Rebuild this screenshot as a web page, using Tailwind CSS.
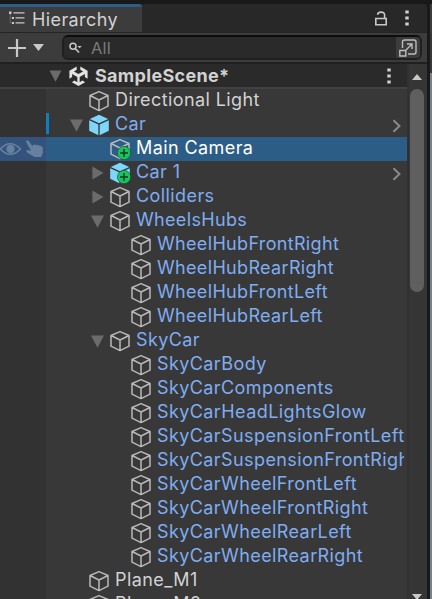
<!DOCTYPE html>
<html lang="en">
<head>
<meta charset="utf-8">
<title>Hierarchy</title>
<script src="https://cdn.jsdelivr.net/npm/@tailwindcss/browser@4"></script>
</head>
<body class="w-[432px] h-[599px] overflow-hidden bg-[#191919] font-['Inter',sans-serif] text-[18px] text-[#d2d2d2]">
<svg class="hidden">
  <symbol id="cube" viewBox="0 0 22 22"><path d="M11 1.6 20 5.5V16.2L11 20.6 2 16.2V5.5ZM2 5.5 11 10 20 5.5M11 10V20.6" fill="none" stroke="#b9b9b9" stroke-width="1.5" stroke-linejoin="round"/></symbol>
  <symbol id="prefab" viewBox="0 0 22 22"><path d="M11 .8 20.2 4.9 11 9.2 1.8 4.9ZM1.2 6.3 10.3 10.6V21.2L1.2 16.8ZM20.8 6.3 11.7 10.6V21.2L20.8 16.8Z" fill="#7fd6fd"/></symbol>
  <symbol id="plus" viewBox="0 0 14 14"><circle cx="7" cy="7" r="6.6" fill="#19c45c" stroke="#174b32" stroke-width=".6"/><path d="M7 3V11M3 7H11" stroke="#103c24" stroke-width="1.5"/></symbol>
  <symbol id="down" viewBox="0 0 12 12"><path d="M0 .4H12L6 11.8Z" fill="#6b6b6b"/></symbol>
  <symbol id="right" viewBox="0 0 12 14"><path d="M.4 .6V13.4L11.6 7Z" fill="#6b6b6b"/></symbol>
  <symbol id="chev" viewBox="0 0 10 14"><path d="M1.5 1.2 7.5 7 1.5 12.8" fill="none" stroke="#8c8c8c" stroke-width="1.9"/></symbol>
  <symbol id="dots" viewBox="0 0 4 16"><path d="M.3 .5H3.7V3.5H.3ZM.3 6.5H3.7V9.5H.3ZM.3 12.5H3.7V15.5H.3Z" fill="#d0d0d0"/></symbol>
</svg>
<div class="flex w-[432px] h-[599px]">
  <div class="w-[427px] shrink-0 flex flex-col pt-1">
    <header class="flex h-7 bg-[#282828] rounded-tr-[3px]">
      <div class="w-[142px] h-7 flex items-center bg-[#3c3c3c] border-t-[3px] border-[#2c5d87] rounded-tr-[3px] pl-[9px]">
        <svg class="w-4 h-3.5 mr-[7px] -mt-[3px]" viewBox="0 0 16 14"><g fill="#c8c8c8"><path d="M0 .5H2.5V3H0ZM3 6H5V8H3ZM3 11H5V13H3Z"/><path d="M4.5 1.2H15.5V2.5H4.5ZM6.5 6.2H15.5V7.5H6.5ZM6.5 11.2H15.5V12.5H6.5Z"/></g><path d="M1.2 3V7H3M1.2 7V12H3" stroke="#777" stroke-width=".7" fill="none"/></svg>
        <span class="tracking-[0.4px] leading-6 whitespace-nowrap">Hierarchy</span>
      </div>
      <div class="flex-1 flex items-center justify-end pr-[18px] gap-[18px]">
        <svg class="w-3 h-[15px]" viewBox="0 0 12 15"><path d="M.8 7.5H11.2V13.8H.8ZM2.6 3.8C2.6.2 9.6.2 9.6 3.8V7.5" fill="none" stroke="#c8c8c8" stroke-width="1.6"/></svg>
        <svg class="w-1 h-4"><use href="#dots"/></svg>
      </div>
    </header>
    <div class="h-8 flex items-center bg-[#3c3c3c] border-t border-b-2 border-t-[#242424] border-b-[#202020] pl-2">
      <svg class="w-[18px] h-[18px]" viewBox="0 0 18 18"><path d="M9 0V18M0 9H18" stroke="#c8c8c8" stroke-width="2.2"/></svg>
      <svg class="w-[11px] h-[7px] ml-[7px]" viewBox="0 0 11 7"><path d="M0 0H11L5.5 7Z" fill="#c8c8c8"/></svg>
      <div class="w-[360px] h-[25px] ml-[18px] flex items-center bg-[#2a2a2a] border-2 border-[#202020] border-t-[#0d0d0d] rounded-[6px] overflow-hidden">
        <svg class="w-[13px] h-3 ml-[5px]" viewBox="0 0 13 12"><circle cx="4" cy="4.3" r="3" fill="none" stroke="#c8c8c8" stroke-width="1.5"/><path d="M6.2 6.5 10 10.5" stroke="#c8c8c8" stroke-width="1.7"/><path d="M8.5 4H12.8L10.6 6.3Z" fill="#c8c8c8"/></svg>
        <span class="ml-[9px] text-[16.5px] text-[#7a7a7a] tracking-[0.2px] leading-5">All</span>
        <div class="ml-auto w-6 h-[21px] bg-[#3c3c3c] flex items-center justify-center">
          <svg class="w-[18px] h-[18px]" viewBox="0 0 18 18"><path d="M3.5 9V3Q3.5 1 5.5 1H15Q17 1 17 3V13Q17 15 15 15H9M.8 11.5H6.8V17H.8ZM7 11 13 5M8 5H13V10" fill="none" stroke="#bdbdbd" stroke-width="1.4"/></svg>
        </div>
      </div>
    </div>
    <div class="flex flex-1 min-h-0">
      <main class="w-[407px] h-[535px] overflow-hidden bg-[#383838]">
        <div class="h-[25px] flex items-center bg-[#2a2a2a] border-b-2 border-[#414141] pl-[49px]">
          <svg class="w-[13px] h-3"><use href="#down"/></svg>
          <svg class="w-[19px] h-5 ml-[7px]" viewBox="0 0 20 22"><path d="M8 .5V4.2L5 6 9.9 8.8 15 6 12 4.2V.5L20 5.2V14L17 12.2V8.8L11.3 12V17.8L14.3 16 17.3 17.8 10 22 2.7 17.8 5.7 16 8.7 17.8V12L3 8.8V12.2L0 14V5.2Z" fill="#e2e2e2"/></svg>
          <span class="ml-[7px] font-bold tracking-[0.3px] leading-5 whitespace-nowrap">SampleScene*</span>
          <svg class="w-1 h-4 ml-auto mr-4"><use href="#dots"/></svg>
        </div>
        <div id="rows"></div>
      </main>
      <div class="w-5 flex flex-col items-center bg-[#353535] border-l-2 border-[#313131] pr-[2px]">
        <svg class="w-2.5 h-1.5 mt-[10px] shrink-0" viewBox="0 0 10 6"><path d="M0 6 5 0 10 6Z" fill="#c8c8c8"/></svg>
        <div class="w-3.5 h-[203px] mt-[9px] rounded-full bg-[#5f5f5f] shrink-0"></div>
        <svg class="w-2.5 h-1.5 mt-auto -mb-px shrink-0" viewBox="0 0 10 6"><path d="M0 0H10L5 6Z" fill="#c8c8c8"/></svg>
      </div>
    </div>
  </div>
  <div class="w-[3px] h-full bg-[#191919]"></div>
  <div class="w-[2px] h-full flex flex-col pt-1"><div class="h-7 bg-[#3c3c3c]"></div><div class="h-[41px] bg-[#383838]"></div><div class="flex-1 bg-[#77818f]"></div></div>
</div>
<template id="row">
  <div class="h-6 flex">
    <div class="gutter w-[46px] shrink-0 bg-[#323232] flex items-center"></div>
    <div class="bar w-[3px] h-[21px] shrink-0"></div>
    <div class="indent shrink-0"></div>
    <div class="fold w-5 shrink-0 flex items-center"></div>
    <div class="icon relative w-[22px] shrink-0 flex items-center"></div>
    <div class="w-[267px] flex-1 overflow-hidden whitespace-nowrap pl-[5px] mr-[3px] leading-[22px]"><span class="name"></span></div>
    <div class="end shrink-0 flex items-center"></div>
  </div>
</template>
<script>
// name, depth, fold arrow, icon, style
const data = [
  ['Directional Light', 0, '', 'cube', 'plain'], ['Car', 0, 'down', 'prefab', 'root'],
  ['Main Camera', 1, '', 'cube+', 'selected'], ['Car 1', 1, 'right', 'prefab+', 'root2'],
  ['Colliders', 1, 'right', 'cube', ''], ['WheelsHubs', 1, 'down', 'cube', ''],
  ['WheelHubFrontRight', 2, '', 'cube', ''], ['WheelHubRearRight', 2, '', 'cube', ''],
  ['WheelHubFrontLeft', 2, '', 'cube', ''], ['WheelHubRearLeft', 2, '', 'cube', ''],
  ['SkyCar', 1, 'down', 'cube', ''], ['SkyCarBody', 2, '', 'cube', ''],
  ['SkyCarComponents', 2, '', 'cube', ''], ['SkyCarHeadLightsGlow', 2, '', 'cube', ''],
  ['SkyCarSuspensionFrontLeft', 2, '', 'cube', ''], ['SkyCarSuspensionFrontRight', 2, '', 'cube', ''],
  ['SkyCarWheelFrontLeft', 2, '', 'cube', ''], ['SkyCarWheelFrontRight', 2, '', 'cube', ''],
  ['SkyCarWheelRearLeft', 2, '', 'cube', ''], ['SkyCarWheelRearRight', 2, '', 'cube', ''],
  ['Plane_M1', 0, '', 'cube', 'plain'], ['Plane_M2', 0, '', 'cube', 'plain']
];
const rows = document.getElementById('rows');
for (const [name, depth, fold, icon, style] of data) {
  const r = document.getElementById('row').content.firstElementChild.cloneNode(true);
  const q = s => r.querySelector(s);
  q('.indent').style.width = 19 + depth * 21 + 'px';
  if (fold === 'down') q('.fold').innerHTML = '<svg class="w-[13px] h-[13px] ml-[2px]"><use href="#down"/></svg>';
  if (fold === 'right') q('.fold').innerHTML = '<svg class="w-3 h-3.5 ml-[3px]"><use href="#right"/></svg>';
  q('.icon').innerHTML = '<svg class="w-[22px] h-[22px]"><use href="#' + icon.replace('+', '') + '"/></svg>' +
    (icon.endsWith('+') ? '<svg class="absolute w-3.5 h-3.5 left-[8px] top-[9px]"><use href="#plus"/></svg>' : '');
  q('.name').textContent = name;
  q('.name').classList.add(name.startsWith('Wheel') ? 'tracking-[0.33px]' : 'tracking-[0.41px]');
  q('.name').classList.add(style === 'plain' ? 'text-[#d2d2d2]' : style === 'selected' ? 'text-white' : 'text-[#7fadf2]');
  if (style === 'root') q('.bar').classList.add('bg-[#0f80be]');
  if (style.startsWith('root')) q('.end').innerHTML = '<svg class="w-2.5 h-3.5 mr-[5px] mt-px"><use href="#chev"/></svg>';
  if (style === 'selected') {
    r.classList.add('bg-[#2c5d87]');
    q('.gutter').classList.replace('bg-[#323232]', 'bg-[#34537c]');
    q('.gutter').innerHTML = '<svg class="w-[46px] h-6" viewBox="0 0 46 24"><path d="M.5 12Q10 1.5 20.5 12 10 22.5 .5 12Z" fill="none" stroke="#67809e" stroke-width="1.7"/><circle cx="10.5" cy="12" r="4.2" fill="#67809e"/><path d="M26.2 5.2Q25.8 3 28 3.3L32.8 9.5V8Q34.5 6.8 35.8 8.3 37.5 7.2 38.7 8.8 40.3 8 41.2 9.6 42.6 9.5 42.8 11V16L41.2 20H34.5L27 15.5Q25.6 13.8 27.5 13L31 14Z" fill="#67809e"/></svg>';
  }
  rows.append(r);
}
</script>
</body>
</html>
